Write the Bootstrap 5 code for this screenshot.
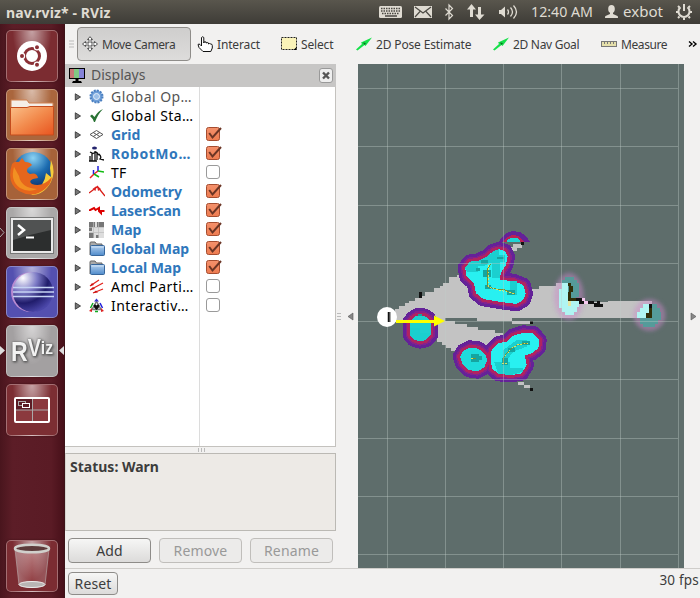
<!DOCTYPE html>
<html lang="en">
<head>
<meta charset="utf-8">
<title>nav.rviz* - RViz</title>
<link href="https://cdn.jsdelivr.net/npm/bootstrap@5.3.0/dist/css/bootstrap.min.css" rel="stylesheet">
<style>
body{width:700px;height:598px;overflow:hidden;font-family:"Noto Sans","Open Sans",sans-serif;font-size:14px;line-height:19px;color:#3c3c3c;background:#f2f1f0}
svg{display:block;flex:none}
.topbar{height:24px;background:linear-gradient(#59564d,#3e3c37);color:#dfdbd2;padding-left:6px}
.topbar b{width:372px;font-size:14px;letter-spacing:.1px}
.dock{width:65px;background:linear-gradient(90deg,#49151d,#5c1d27 20%,#5a1b25 80%,#471019);padding:6px 0 6px 6px;gap:7px;border-right:1px solid #3d1419}
.tile{width:52px;height:52px;border-radius:5px;border:1px solid #ffffff50;flex:none;background:radial-gradient(ellipse at 50% 0,#ffffff90,#ffffff00 55%),var(--c);box-shadow:0 0 2px #2008}
.rvizlogo{font:700 28px "Liberation Sans",sans-serif;fill:#f2f2f2;filter:drop-shadow(1px 1px 1px #555) drop-shadow(0 0 1px #666)}
.tools{height:40px;font-size:12px;padding-left:3px;letter-spacing:-.15px}
.tool{gap:4px;height:34px;flex:none}
.movebtn{width:114px;padding-left:4px;border:1px solid #8f8d8a;border-radius:4px;background:linear-gradient(#cfcecd,#dddcdb);margin-right:6px;letter-spacing:-.4px}
.side{width:271px}
.phead{height:23px;background:#c7c6c5;color:#555;padding:0 3px 1px 4px}
.ptitle{margin-left:6px;letter-spacing:0;position:relative;top:-1px}
.closebtn{width:14px;height:15px;border:1px solid #999;border-radius:3px;background:#eee}
.tree{height:360px;background:#fff;border:1px solid #c4c2be;border-top:0;border-left:0}
.names{width:135px;border-right:1px solid #dcdcdc}
.item{height:19px;padding-left:9px;gap:7px;white-space:nowrap}
.item span{color:#000;letter-spacing:.2px}
.item.wide-name span{letter-spacing:.45px}
.item.on span{color:#2f77bb;font-weight:700;letter-spacing:-.05px}
.item.on.wide-name span{letter-spacing:.55px}
.checks{padding:39px 0 0 6px}
.checks svg{margin-bottom:3px}
.hgrip{height:6px}
.desc{height:78px;border:1px solid #bbb9b4;border-left-color:#d6d3ce;background:#edeae6;padding:3px 4px;font-weight:700;font-size:14px;letter-spacing:0}
.pbtn{border:1px solid #8e8c89;border-radius:4px;background:linear-gradient(#f6f6f5,#dcdbda);color:#3c3c3c;padding:0;font-size:14px;line-height:22px;text-align:center;font-family:inherit}
.pbtn:disabled{border-color:#c0bebb;color:#999;background:#ecebea}
.wide{width:83px;height:25px;letter-spacing:.15px}
.rst{width:50px;height:23px;line-height:20px;letter-spacing:.1px}
.foot{height:30px;border-top:1px solid #cfcdca;padding:3px 1px 0 3px}
.fps{font-size:13.5px;letter-spacing:.2px;line-height:17px}
.soft{filter:blur(2px)}
</style>
<script src="https://cdn.jsdelivr.net/npm/bootstrap@5.3.0/dist/js/bootstrap.bundle.min.js"></script>
</head>
<body class="d-flex flex-column">
<svg width="0" height="0" class="position-absolute">
<defs>
<linearGradient id="org" x2="0" y2="1"><stop stop-color="#f4916c"/><stop offset="1" stop-color="#ee7c50"/></linearGradient>
<linearGradient id="fold" x2="1" y2="1"><stop stop-color="#fbc08a"/><stop offset=".5" stop-color="#f28a4c"/><stop offset="1" stop-color="#e8541f"/></linearGradient>
<linearGradient id="blu" x2="0" y2="1"><stop stop-color="#b4d0ee"/><stop offset="1" stop-color="#4f8bcb"/></linearGradient>
<radialGradient id="globe" cx=".5" cy=".15" r=".8"><stop stop-color="#8bd2f3"/><stop offset=".5" stop-color="#1c6cb0"/><stop offset="1" stop-color="#0b2a63"/></radialGradient>
<radialGradient id="ecl" cx=".25" cy=".15" r=".9"><stop stop-color="#fff"/><stop offset=".4" stop-color="#7a78c4"/><stop offset=".7" stop-color="#201c6b"/><stop offset="1" stop-color="#4a46a8"/></radialGradient>
<linearGradient id="glass" x2="1"><stop stop-color="#fff" stop-opacity=".35"/><stop offset=".5" stop-color="#c77" stop-opacity=".3"/><stop offset="1" stop-color="#fff" stop-opacity=".2"/></linearGradient>
<symbol id="tri" viewBox="0 0 7 8"><path d="M.8.8 6 4 .8 7.2Z" fill="#777" stroke="#444"/></symbol>
<symbol id="on" viewBox="0 0 16 16"><rect x=".5" y="1.500" width="13" height="13" rx="2" fill="url(#org)" stroke="#a54d30"/><path d="M3.200 7 6.500 11.500 15 2" fill="none" stroke="#6b3525" stroke-width="2"/></symbol>
<symbol id="off" viewBox="0 0 16 16"><rect x=".5" y="1.500" width="13" height="13" rx="2.500" fill="#fff" stroke="#9a9a9a"/></symbol>
<symbol id="folder" viewBox="0 0 16 16"><path d="M1 14V2q0-1 1-1h4l1.500 2H13v3" fill="#aaa" stroke="#666"/><rect x="1.500" y="4.500" width="14" height="10" rx="1" fill="url(#blu)" stroke="#37669b"/><path d="M2.500 6h12" stroke="#cfe2f6"/></symbol>
<symbol id="arrow" viewBox="0 0 16 14"><path d="M0 12.500 6 7 5 5.500 16 .5 9.500 9 8.500 8 1.500 13.500Z" fill="#16e04a"/><path d="M7 5.500 10 6 8.500 8Z" fill="#087022"/></symbol>
<path id="bA" d="M285 128 300 110 325 107 350 95 370 78 387 73 405 78 413 95 408 120 392 145 390 165 430 168 460 180 467 205 460 225 440 237 400 232 340 222 318 205 312 175 290 155Z"/>
<path id="bC" d="M270 395 280 378 300 368 325 371 345 387 352 405 343 427 322 439 297 435 278 418Z"/>
<path id="bD" d="M365 375 385 355 410 350 430 332 460 323 490 325 508 345 505 370 485 385 465 392 470 420 455 445 425 450 385 447 366 430 362 400Z"/>
<path id="bB" d="M120 290 128 280 140 272H162L175 280 182 290V330L168 345 150 349 132 344 120 330Z"/>
</defs></svg>

<header class="topbar d-flex align-items-center">
<b>nav.rviz* - RViz</b>
<svg width="322" height="24" viewBox="378 0 322 24" fill="#dfdbd2">
<rect x="379" y="6" width="23" height="12" rx="1.500"/><path d="M381 8.500h19M381 11h19M382 13.500h17" stroke="#4b4943" stroke-width="1.500" stroke-dasharray="1.500 1"/><path d="M385 16h12" stroke="#4b4943" stroke-width="1.500"/>
<rect x="414" y="6" width="18" height="12"/><path d="m415 7 8 6 8-6M415 17l5-5.500M431 17l-5-5.500" stroke="#4b4943" fill="none" stroke-width="1.200"/>
<path d="m445.500 8.500 7 7-3.500 3.500V5l3.500 3.500-7 7" fill="none" stroke="#dfdbd2" stroke-width="1.200"/>
<path d="m467 9.500 4.500-5.500 4.500 5.500h-3V17h-3V9.500ZM475 14.500h3V7h3v7.500h3.500L479.500 20Z"/>
<path d="M499 10h2l4-3.500v11L501 14h-2Z"/><path d="M507.500 9.500q2 2.500 0 5M510.500 7.500q4 4.500 0 9M513.500 5.500q6 6.500 0 13" fill="none" stroke="#dfdbd2" stroke-width="1.300"/>
<ellipse cx="611.500" cy="9" rx="3.300" ry="4"/><path d="M610 12h3v2l4.500 2q.5 0 .5 2h-13q0-2 .5-2l4.500-2Z"/>
<path d="M680.500 7.300a5.500 5.500 0 1 0 7 0" fill="none" stroke="#dfdbd2" stroke-width="2"/><path d="M684 4v7M676 12h2M690 12h2M678 6l1.500 1.500M690 6l-1.500 1.500M678 18l1.500-1.500M690 18l-1.500-1.500M684 18v2" stroke="#dfdbd2" stroke-width="2"/>
<text x="531" y="17" font-size="14" textLength="62" lengthAdjust="spacingAndGlyphs">12:40 AM</text>
<text x="623" y="17" font-size="14" textLength="40" lengthAdjust="spacingAndGlyphs">exbot</text>
</svg>
</header>

<div class="d-flex flex-grow-1">
<nav class="dock d-flex flex-column position-relative">
<div class="tile" style="--c:#7b2c31"><svg width="50" height="50" viewBox="0 0 50 50"><circle cx="25" cy="25" r="15" fill="#fff"/><circle cx="25" cy="25" r="7.500" fill="none" stroke="#8b3036" stroke-width="3"/><g fill="#8b3036" stroke="#fff" stroke-width="1.200"><circle cx="15" cy="25" r="2.600"/><circle cx="30" cy="16.300" r="2.600"/><circle cx="30" cy="33.700" r="2.600"/></g></svg></div>
<div class="tile" style="--c:#aa663d"><svg width="50" height="50" viewBox="0 0 50 50"><path d="M4 18V10h16l2 3h24v6Z" fill="#f5eee8" stroke="#d08050"/><path d="M3.500 17.500H20l3-1h23.500V45h-43Z" fill="url(#fold)" stroke="#c44c1d"/></svg></div>
<div class="tile" style="--c:#a66239"><svg width="50" height="50" viewBox="0 0 50 50"><circle cx="26" cy="23" r="20" fill="url(#globe)"/><path d="M44 11q5 12 0 22-7 13-20 13 14-9 15-22l5 4-1-9Z" fill="#f6cd3b"/><path d="M5 15q-6 19 7 27 14 8 26-2 6-5 7-12-10 11-20 7-4-3 1-5l5-1q-1-6-8-4-5-2-2-6l4-3q-2-3-7-3l-3-4-3 4q-5-1-7 2Z" fill="#e6661c"/><path d="M7 18q-4 14 6 21 9 5 17 1-16-1-18-13Z" fill="#f29022"/></svg></div>
<div class="tile" style="--c:#aaa8a8"><svg width="50" height="50" viewBox="0 0 50 50"><rect x="3.500" y="9.500" width="43" height="36" fill="#e9e9e9" stroke="#777"/><rect x="6" y="12" width="38" height="31" fill="#2c2e2e"/><path d="M6 12h38v10Q25 26 6 32Z" fill="#505252"/><path d="m11 17 6 5-6 5" fill="none" stroke="#fff" stroke-width="2.500"/><path d="M19 29.500h8" stroke="#fff" stroke-width="2"/></svg></div>
<div class="tile" style="--c:#5450b0"><svg width="50" height="50" viewBox="0 0 50 50"><circle cx="24" cy="25" r="20" fill="#b88ad0"/><circle cx="26" cy="25" r="20" fill="url(#ecl)"/><path d="M6 20.500h41M6 25h41M6 29.500h41" stroke="#c6d4f4" stroke-width="1.600"/></svg></div>
<div class="tile" style="--c:#a3a0a1"><svg width="50" height="50" viewBox="0 0 50 50"><text class="rvizlogo" y="35" textLength="42" lengthAdjust="spacingAndGlyphs" x="4">R<tspan font-size="25" style="font-size:24px" dy="-5">V</tspan><tspan style="font-size:19px" dy="-2">iz</tspan></text></svg></div>
<div class="tile" style="--c:#7c2e33"><svg width="50" height="50" viewBox="0 0 50 50" fill="none"><path d="M8 13.500h34v23H8Z" fill="#8b393e"/><path d="M9 14h16v11H9Z" fill="#5b1b24"/><path d="M25.500 14v23M9 25h33" stroke="#aaa"/><rect x="8" y="13" width="34" height="24" rx="1" stroke="#fff" stroke-width="2"/><rect x="11.500" y="16.500" width="7" height="4" stroke="#aaa"/><rect x="15.500" y="18.500" width="7" height="4" fill="#5b1b24" stroke="#fff"/></svg></div>
<div class="tile mt-auto" style="--c:#7b2c32"><svg width="50" height="50" viewBox="0 0 50 50"><path d="m8 8 4 36q13 5 26 0l4-36Z" fill="url(#glass)" stroke="#b5a0a0" stroke-width=".7"/><ellipse cx="25" cy="43.500" rx="13" ry="3" fill="#b9b5b4" stroke="#eee"/><ellipse cx="25" cy="7.500" rx="17" ry="3.800" fill="#5d3b3b" stroke="#d0d0cc" stroke-width="2.500"/></svg></div>
<svg class="position-absolute top-0 start-0" width="65" height="400" viewBox="0 24 65 400" fill="#ddd"><path d="m0 228 4 4.500-4 4.500" fill="none" stroke="#aaa"/><path d="m0 346 5 4.500-5 4.500ZM64 346l-5 4.500 5 4.500Z"/></svg>
</nav>

<main class="d-flex flex-column flex-grow-1">
<div class="tools d-flex align-items-center">
<svg width="9" height="12"><path d="M1 3h5M1 6h5M1 9h5" stroke="#bbb"/></svg>
<div class="tool movebtn d-flex align-items-center"><svg width="16" height="16" viewBox="0 0 16 16"><path d="M8 .7 10.500 3.500H9V7h3.500V5.500L15.500 8l-3 2.500V9H9v3.500h1.500L8 15.300 5.500 12.500H7V9H3.500v1.500L.5 8l3-2.500V7H7V3.500H5.500Z" fill="#fff" stroke="#444" stroke-width=".9"/></svg><span>Move Camera</span></div>
<div class="tool d-flex align-items-center" style="width:84px"><svg width="16" height="16" viewBox="0 0 16 16"><path d="M4.500 10V1.500q1.200-1.500 2.300 0V7q0-2 2.300-1V7q1-1 2.400 0v1q1-1 2.300 0 1.500 0 1.500 1.500V12l-1.500 3.500H6L2 11.500 1 8.500q1-1 2 0Z" fill="#fff" stroke="#111"/></svg><span>Interact</span></div>
<div class="tool d-flex align-items-center" style="width:75px"><svg width="16" height="14" viewBox="0 0 16 14"><rect x=".5" y=".5" width="15" height="12" fill="#faf3b8" stroke="#222" stroke-dasharray="2 1"/><path d="M15.500 10v3h-3Z"/></svg><span>Select</span></div>
<div class="tool d-flex align-items-center" style="width:137px"><svg width="16" height="14"><use href="#arrow"/></svg><span>2D Pose Estimate</span></div>
<div class="tool d-flex align-items-center" style="width:108px"><svg width="16" height="14"><use href="#arrow"/></svg><span style="letter-spacing:-.3px">2D Nav Goal</span></div>
<div class="tool d-flex align-items-center" style="width:87px"><svg width="16" height="8" viewBox="0 0 16 8"><rect x=".5" y="1.500" width="15" height="5" fill="#e5dfaa" stroke="#777"/><path d="M3.500 2v2M6.500 2v2M9.500 2v2M12.500 2v2" stroke="#777"/></svg><span style="letter-spacing:-.4px">Measure</span></div>
<svg width="10" height="8" viewBox="0 0 10 8"><path d="m1 1.500 3 2.500-3 2.500M5 1.500 8 4 5 6.500" fill="none" stroke="#000" stroke-width="1.400"/></svg>
</div>

<div class="d-flex" style="height:504px">
<section class="side d-flex flex-column">
<div class="phead d-flex align-items-center"><svg width="16" height="17" viewBox="0 0 16 17"><path d="M0 1h16v11H0ZM6.500 12h3v2H12l1 2H3l1-2h2.500Z"/><path d="M1 2h4v9H1Z" fill="#c87878"/><path d="M5 2h5v9H5Z" fill="#81c884"/><path d="M10 2h5v9h-5Z" fill="#8583d8"/></svg><span class="ptitle me-auto">Displays</span><span class="closebtn"><svg width="12" height="13" viewBox="0 0 12 13"><path d="m3 3.500 6 6M9 3.500l-6 6" stroke="#555" stroke-width="2.400"/></svg></span></div>
<div class="tree d-flex">
<div class="names">
<div class="item wide-name d-flex align-items-center"><svg width="8" height="8"><use href="#tri"/></svg><svg width="15" height="15" viewBox="0 0 15 15"><circle cx="7.500" cy="7.500" r="6" fill="#6f9fd8" stroke="#4a7fc0" stroke-width="2" stroke-dasharray="2 1.100"/><circle cx="7.500" cy="7.500" r="3" fill="#9bbfe8" stroke="#e4effa"/></svg><span style="color:#555">Global Op…</span></div>
<div class="item wide-name d-flex align-items-center"><svg width="8" height="8"><use href="#tri"/></svg><svg width="15" height="15" viewBox="0 0 15 15"><path d="m1 8 2-1.500L5.500 9Q9 3 14 1 9 6 6 14H5Q3.500 10 1 8Z" fill="#287233"/></svg><span>Global Sta…</span></div>
<div class="item on d-flex align-items-center"><svg width="8" height="8"><use href="#tri"/></svg><svg width="15" height="15" viewBox="0 0 15 15"><path d="m1 7.500 6.500-4 6.500 4-6.500 4ZM4.200 5.500l6.600 4M10.800 5.500l-6.600 4" fill="none" stroke="#555"/></svg><span>Grid</span></div>
<div class="item on wide-name d-flex align-items-center"><svg width="8" height="8"><use href="#tri"/></svg><svg width="15" height="16" viewBox="0 0 15 16"><ellipse cx="5.500" cy="2" rx="2.500" ry="1.500" fill="#24246d"/><path d="M1 6l2 1v8M6 5v10M8 6v8M3 8l4-2 3 3M10 8q3 3 1 5l4 1M1 10v5M0 15h8" fill="none" stroke="#111" stroke-width="1.300"/></svg><span>RobotMo…</span></div>
<div class="item d-flex align-items-center"><svg width="8" height="8"><use href="#tri"/></svg><svg width="15" height="15" viewBox="0 0 15 15"><path d="M9 6 5 9M5 9l-4 4" stroke="#e22" stroke-width="1.500"/><path d="M9 6V1M4.500 9V5" stroke="#22d" stroke-width="1.500"/><path d="m9 6 6 1M5 9l5 3" stroke="#1b1" stroke-width="1.500"/></svg><span>TF</span></div>
<div class="item on d-flex align-items-center"><svg width="8" height="8"><use href="#tri"/></svg><svg width="16" height="15" style="margin-right:-1px" viewBox="0 0 16 15"><path d="M0 9 8 3M8 2l8 10" stroke="#d81b14" stroke-width="1.300"/><path d="M7.500 2 6.500 7 3.500 5ZM8 2l1 5 3-2Z" fill="#d22"/></svg><span style="letter-spacing:0">Odometry</span></div>
<div class="item on d-flex align-items-center"><svg width="8" height="8"><use href="#tri"/></svg><svg width="16" height="15" style="margin-right:-1px" viewBox="0 0 16 15"><path d="M1 8V7l4-2 1.500 2L10 5v3l2 2V8h3.500" fill="none" stroke="#d00" stroke-width="2"/></svg><span>LaserScan</span></div>
<div class="item on d-flex align-items-center"><svg width="8" height="8"><use href="#tri"/></svg><svg width="15" height="16" viewBox="0 0 15 16"><path d="M0 0h15v16H0Z" fill="#ddd"/><path d="M0 0h6v5H3v4H0ZM8 0h7v5H8ZM0 11h5v5H0ZM7 13h3v3H7Z" fill="#777"/><path d="M4.500 0v16M9.500 0v16M0 5.500h15M0 10.500h15" stroke="#bbb" stroke-width=".7"/></svg><span>Map</span></div>
<div class="item on d-flex align-items-center"><svg width="8" height="8"><use href="#tri"/></svg><svg width="16" height="16" style="margin-right:-1px"><use href="#folder"/></svg><span>Global Map</span></div>
<div class="item on d-flex align-items-center"><svg width="8" height="8"><use href="#tri"/></svg><svg width="16" height="16" style="margin-right:-1px"><use href="#folder"/></svg><span>Local Map</span></div>
<div class="item wide-name d-flex align-items-center"><svg width="8" height="8"><use href="#tri"/></svg><svg width="15" height="15" viewBox="0 0 15 15"><path d="m1 7 9-6M1 11l13-7M4 14l10-4" stroke="#e2231c" stroke-width="1.300"/><path d="m1 7 4-1-2-2ZM1 11l5-1-2-2ZM4 14l5-.5-2-2Z" fill="#c11"/></svg><span>Amcl Parti…</span></div>
<div class="item wide-name d-flex align-items-center"><svg width="8" height="8"><use href="#tri"/></svg><svg width="15" height="15" viewBox="0 0 15 15"><path d="M7.500 3.500 3 11.500h9Z" fill="#fff" stroke="#777" stroke-width="1.500"/><path d="M4.500 7.500q1.500-2 3 0 1.500-2 3 0 0 2-3 4.500-3-2.500-3-4.500Z" fill="#111"/><path d="M5 3.500 7.500.5l2.500 3Z" fill="#33c"/><path d="M4 5 1.500 10M6 13.500h3" stroke="#1a2" stroke-width="1.500"/><path d="m11 5 2.500 5" stroke="#22d" stroke-width="1.500"/><path d="m0 13 3-3v4Zm15 0-3-3v4Z" fill="#d22"/></svg><span>Interactiv…</span></div>
</div>
<div class="checks d-flex flex-column">
<svg width="16" height="16"><use href="#on"/></svg><svg width="16" height="16"><use href="#on"/></svg><svg width="16" height="16"><use href="#off"/></svg><svg width="16" height="16"><use href="#on"/></svg><svg width="16" height="16"><use href="#on"/></svg><svg width="16" height="16"><use href="#on"/></svg><svg width="16" height="16"><use href="#on"/></svg><svg width="16" height="16"><use href="#on"/></svg><svg width="16" height="16"><use href="#off"/></svg><svg width="16" height="16"><use href="#off"/></svg>
</div>
</div>
<div class="hgrip d-flex justify-content-center"><svg width="8" height="6"><path d="M1.500 1v4M4.500 1v4M7.500 1v4" stroke="#bbb"/></svg></div>
<div class="desc">Status: Warn</div>
<div class="d-flex gap-2 mt-auto" style="padding:0 0 5px 3px"><button class="pbtn wide">Add</button><button class="pbtn wide" disabled>Remove</button><button class="pbtn wide" disabled>Rename</button></div>
</section>
<svg width="22" height="504" viewBox="336 64 22 504"><path d="M337 313.500h4M337 316.500h4M337 319.500h4" stroke="#bbb"/><path d="m353 313-5 3.500 5 3.500Z" fill="#888" stroke="#555" stroke-width=".6"/></svg>

<svg width="326" height="504" viewBox="358 64 326 504">
<rect x="358" y="64" width="326" height="504" fill="#5e6d6b"/>
<g transform="translate(370 225) scale(.33333)" shape-rendering="crispEdges">
<path fill="#c3c3c3" d="M60 270H75V253H88V244H104V235H117V227H135V218H148V212H165V201H192V190H210V183H220V173H236V157H262V149H300L330 200H485V192H507V183H558V174H600V230H715V228H847V279H426V288H480V297H426V288H320V279H225V288H255V297H290V305H325V314H375V323H400V360L370 400H260V378H242V369H228V360H215V350H200V333H170V300L60 290Z"/>
<path fill="#c3c3c3" d="M415 65H430V56H455V70H440V78H415ZM400 455H430V463H400ZM443 472H463V481H480V490H463V481H443Z"/>
<path fill="#111" d="M147 201h9v18h-9ZM453 50h9v9h-9ZM480 289h9v8h-9ZM480 488h9v9h-9Z"/>
<g stroke-linejoin="round">
<g fill="#642298" stroke="#642298" stroke-width="44"><use href="#bA"/><use href="#bC"/><use href="#bD"/><use href="#bB"/></g>
<g fill="#85208c" stroke="#85208c" stroke-width="26"><use href="#bA"/><use href="#bC"/><use href="#bD"/><use href="#bB"/></g>
<g stroke="#b02460" stroke-width="17"><use href="#bA"/><use href="#bC"/><use href="#bD"/><use href="#bB"/></g>
<use href="#bA" fill="#28f0f0"/><use href="#bC" fill="#1fdcdc"/><use href="#bD" fill="#28f0f0"/><use href="#bB" fill="#1fd0d0"/>
</g>
<path fill="#642298" d="M386 50 398 35 412 23 430 18 452 22 468 34 480 50Z"/><path fill="#b92055" d="M400 50 412 37 430 29 450 36 462 50Z"/><path fill="#1fd5d5" d="M410 50V45L425 39H440L450 45V50Z"/>
<path fill="#1bcfcf" d="M285 128 300 110 325 107 350 95 375 76 387 73V90H405V110H370L345 122H325V140H290ZM365 110H390V160H365ZM120 310H150V325H182V330L168 345 150 349 132 344 120 330ZM372 410H420V430H460V440L425 450 385 447ZM400 375 440 345H470V365L430 380 415 400H400ZM420 168H440V210H420Z"/>
<path fill="#15a5a0" d="M333 105h20v12h-20ZM318 130h12v9h-12ZM340 135h22v20h-22ZM380 95h22v8h-22ZM345 180h18v12h-18ZM410 195h25v14h-25ZM145 268h12v5h-12ZM303 388h24v24h-24ZM325 394h12v10h-12ZM415 368h20v13h-20ZM455 348h24v12h-24ZM395 400h18v20h-18Z"/>
<path d="M362 117 354 130V185L380 193H400L420 202 434 206M302 401H318M402 418V395L425 370 445 358 475 355" fill="none" stroke="#7a8e30" stroke-width="3"/><path d="M355 120V186L380 194 434 206M304 401H316M396 416H410M405 393 425 370 445 358 475 355" fill="none" stroke="#f4f65a" stroke-width="2.500" stroke-dasharray="5 5"/>
</g>
<g fill="#bd8ad4" fill-opacity=".4" class="soft"><ellipse cx="569" cy="296.500" rx="15" ry="24"/><circle cx="649.500" cy="315" r="16"/></g>
<g fill="none" stroke="#f08ab0" stroke-width="3" stroke-opacity=".25" class="soft"><ellipse cx="569" cy="296.500" rx="11.500" ry="20"/><circle cx="649.500" cy="315" r="13"/></g>
<g transform="translate(540 260) scale(.33333)" shape-rendering="crispEdges">
<path fill="#559b9a" d="M66 69V60H75V52H102V60H110V69H117V112H108V123H84V69ZM335 133H350V143H360V155H363V180H355V191H345V200H310V191H300V174H335Z"/>
<path fill="#b0f5f2" d="M57 87H66V69H84V115H117V140H110V155H102V164H75V155H66V143H57ZM292 155H300V143H310V133H335V174H292Z"/>
<path fill="#e5e7a3" d="M84 115H93V138H84Z"/>
<path fill="#302e08" d="M84 69H93V78H99V96H93V114H108V123H84V96H87V78H84ZM328 131H336V174H318V160H328Z"/>
<path fill="#111" d="M108 114H125V123H132V132H116V123H108ZM144 123H161V128H172V123H180V132H189V140H163V133H144ZM326 132H336V145H326Z"/>
<path fill="#f5c8ef" d="M126 114H135V122H126ZM132 123H143V132H132Z"/>
</g>
<path d="M387.500 64V568M445.500 64V568M503.500 64V568M561.500 64V568M620.500 64V568M678.500 64V568M358 88.500H678M358 146.500H678M358 205.500H678M358 263.500H678M358 321.500H678M358 379.500H678M358 438.500H678M358 496.500H678M358 554.500H678" stroke="#c0ccc9" stroke-opacity=".38" fill="none"/>
<circle cx="387" cy="317" r="10" fill="#fff"/><path d="M389 312v10" stroke="#111" stroke-width="2.500"/><path d="M390 312v10" stroke="#888"/><path d="M396 320H434V315.500L445 321 434 326.500V323H396Z" fill="#ff0"/>
</svg>
<svg width="16" height="504" viewBox="684 64 16 504"><path d="m691 313 5 3.500-5 3.500Z" fill="#888" stroke="#555" stroke-width=".6"/></svg>
</div>
<footer class="foot d-flex justify-content-between align-items-start"><button class="pbtn rst">Reset</button><span class="fps">30 fps</span></footer>
</main>
</div>
</body>
</html>
